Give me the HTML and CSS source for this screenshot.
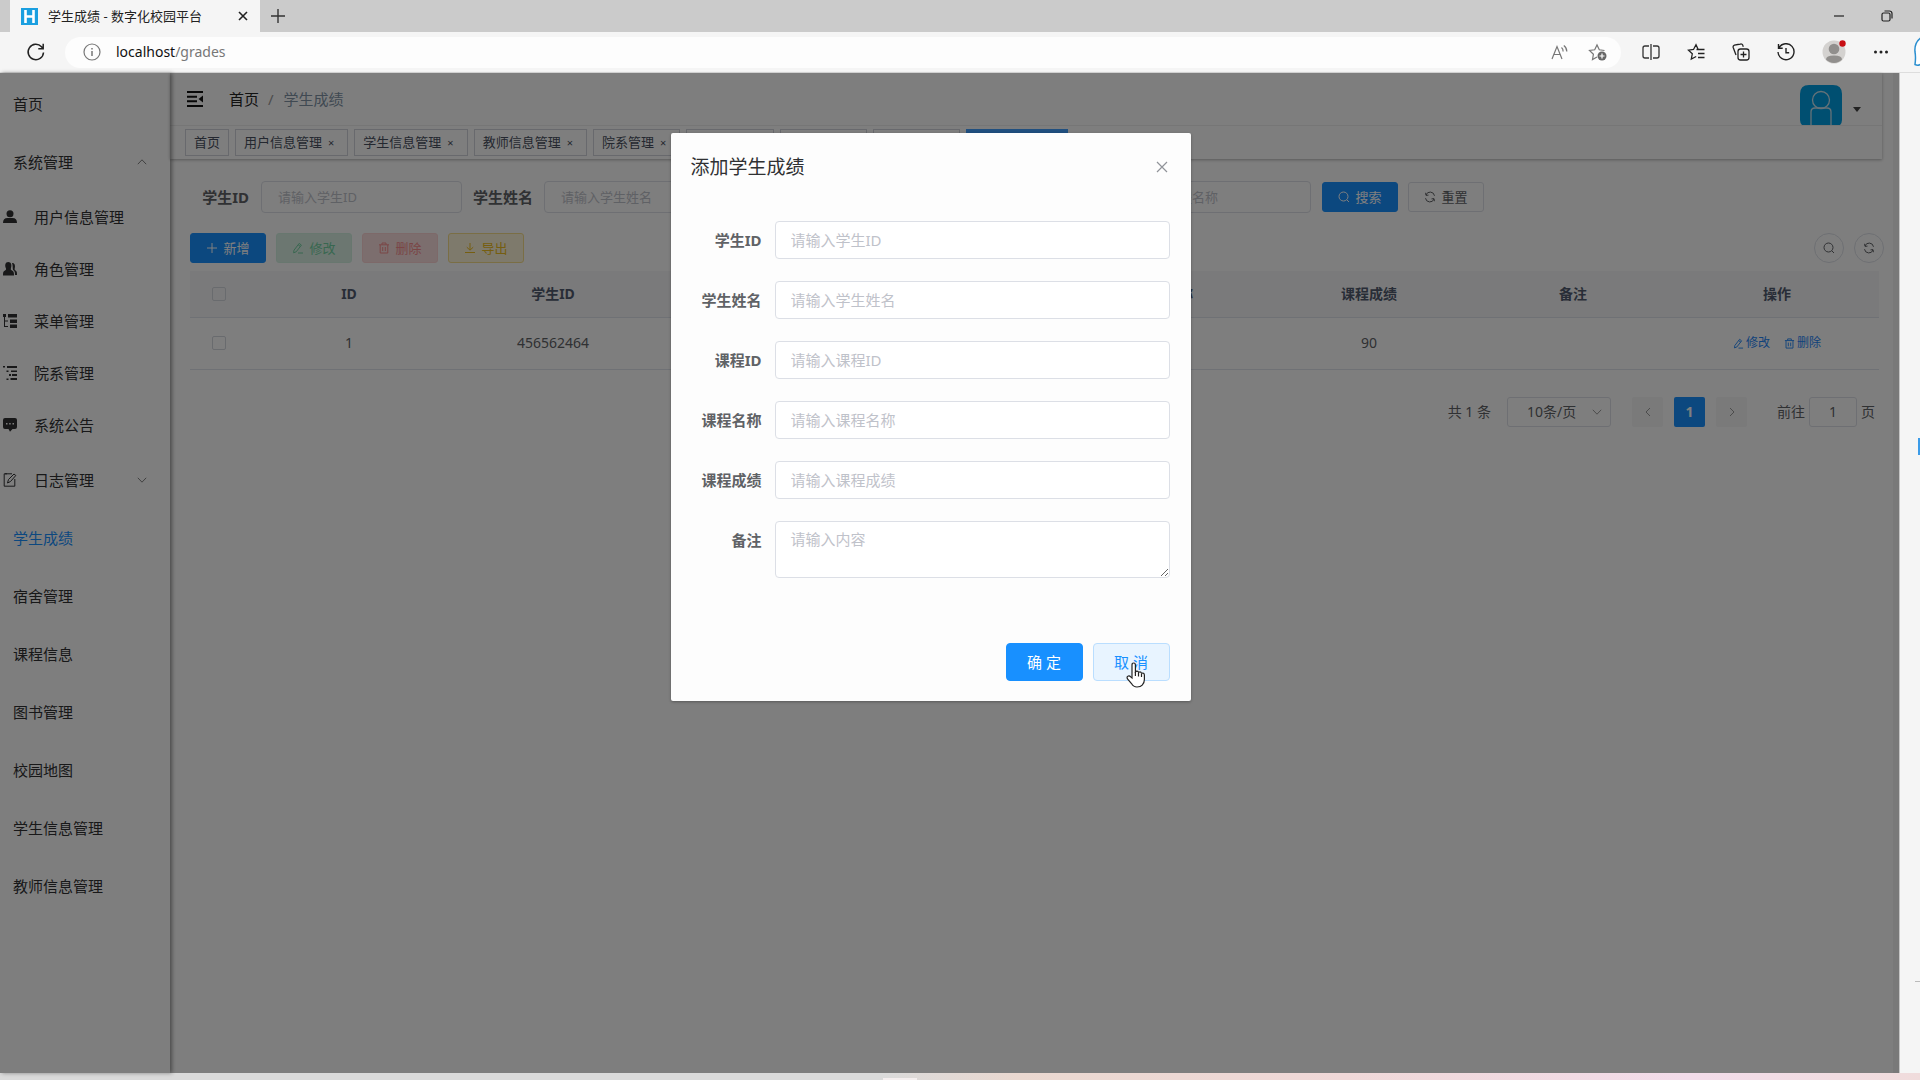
FILE: index.html
```html
<!DOCTYPE html>
<html lang="zh-CN">
<head>
<meta charset="utf-8">
<meta name="viewport" content="width=device-width, initial-scale=1">
<title>学生成绩 - 数字化校园平台</title>
<link rel="stylesheet" href="styles.css">
</head>
<body>
<svg class="sprite" aria-hidden="true">
  <symbol id="i-search" viewBox="0 0 12 12"><circle cx="5.5" cy="5.5" r="4.5"/><path d="M8.8 8.8 11 11"/></symbol>
  <symbol id="i-refresh" viewBox="0 0 12 12"><path d="M1.5 7.2A4.4 4.4 0 0 0 10 8M10.5 4.8A4.4 4.4 0 0 0 2 4M1.6 1.8 2 4.4l2.5-.3M10.4 10.2 10 7.6l-2.5.3"/></symbol>
  <symbol id="i-edit" viewBox="0 0 12 12"><path d="M2 8.2 7.2 1.4l2.2 1.7L4.2 9.8 1.6 10.8zM6 11h5M6.2 2.8l2.2 1.7"/></symbol>
  <symbol id="i-trash" viewBox="0 0 12 12"><path d="M1 2.8h10M4 2.6V1h4v1.6M2.2 3v8h7.6V3M4.7 5v4M7.3 5v4"/></symbol>
  <symbol id="i-plus" viewBox="0 0 12 12"><path d="M6 1v10M1 6h10"/></symbol>
  <symbol id="i-download" viewBox="0 0 12 12"><path d="M6 1v7M2.8 5.2 6 8.2l3.2-3M1 10.5h10"/></symbol>
  <symbol id="i-up" viewBox="0 0 10 10"><path d="M.8 7.2 5 2.8l4.2 4.4"/></symbol>
  <symbol id="i-down" viewBox="0 0 10 10"><path d="M.8 2.8 5 7.2l4.2-4.4"/></symbol>
  <symbol id="i-left" viewBox="0 0 10 10"><path d="M7 1 3 5l4 4"/></symbol>
  <symbol id="i-right" viewBox="0 0 10 10"><path d="M3 1l4 4-4 4"/></symbol>
</svg>

<header class="browser">
  <div class="tabstrip">
    <div class="tab">
      <svg class="favicon" viewBox="0 0 17 17"><rect width="17" height="17" fill="#1a9fe0"/><path d="M4.5 2v13M12.5 2v13M4.5 8.5h8" stroke="#fff" stroke-width="2.6" fill="none"/></svg>
      <span class="tab-title">学生成绩 - 数字化校园平台</span>
      <button class="bare" aria-label="关闭标签页"><svg width="10" height="10" viewBox="0 0 10 10"><path d="M1 1l8 8M9 1 1 9" stroke="#222" stroke-width="1.6"/></svg></button>
    </div>
    <button class="bare newtab" aria-label="新建标签页"><svg width="16" height="16" viewBox="0 0 16 16"><path d="M8 1v14M1 8h14" stroke="#333" stroke-width="1.4"/></svg></button>
    <div class="window-buttons">
      <button class="bare" aria-label="最小化"><svg width="12" height="12" viewBox="0 0 12 12"><path d="M1 6h10" stroke="#222" stroke-width="1.2"/></svg></button>
      <button class="bare" aria-label="还原"><svg width="12" height="12" viewBox="0 0 12 12" fill="none" stroke="#222" stroke-width="1.2"><rect x="1" y="3" width="8" height="8" rx="1.5"/><path d="M3.5 1h5A2.5 2.5 0 0 1 11 3.500v5"/></svg></button>
    </div>
  </div>
  <div class="toolbar">
    <button class="bare reload" aria-label="刷新"><svg width="20" height="20" viewBox="0 0 20 20" fill="none" stroke="#222" stroke-width="1.500"><path d="M17.500 10.500A7.700 7.700 0 1 1 15.500 4.800L17 6.500M17.200 1.800v4.900h-4.900"/></svg></button>
    <div class="address">
      <svg width="18" height="18" viewBox="0 0 18 18" fill="none" stroke="#777" stroke-width="1.2"><circle cx="9" cy="9" r="8"/><path d="M9 8v5M9 5v1.4" stroke-width="1.500"/></svg>
      <span class="url">localhost<span class="url-path">/grades</span></span>
      <button class="bare" aria-label="大声朗读"><svg width="18" height="16" viewBox="0 0 18 16" fill="none" stroke="#777" stroke-width="1.2"><path d="M1 15 6 2.500 11 15M2.800 10.500h6.400M10.500 3.500q1.800 1.500 1.600 4M12.800 1.500q3 2.200 3 6"/></svg></button>
      <button class="bare star" aria-label="收藏"><svg width="19" height="18" viewBox="0 0 19 18" fill="none" stroke="#777" stroke-width="1.2"><path d="M9 14 4.500 16.500l.9-5.200L1.500 7.500l5.200-.7L9 2l2.300 4.800 5.200.7"/><circle cx="14" cy="13" r="4.500" fill="#666" stroke="none"/><path d="M14 10.500v5M11.500 13h5" stroke="#fff"/></svg></button>
    </div>
    <div class="tools">
      <button class="bare" aria-label="分屏"><svg width="18" height="18" viewBox="0 0 18 18" fill="none" stroke="#333" stroke-width="1.300"><path d="M7 3H3a2 2 0 0 0-2 2v8a2 2 0 0 0 2 2h4M11 3h4a2 2 0 0 1 2 2v8a2 2 0 0 1-2 2h-4M9 1v16"/></svg></button>
      <button class="bare" aria-label="收藏夹"><svg width="18" height="18" viewBox="0 0 18 18" fill="none" stroke="#222" stroke-width="1.300"><path d="M9.500 6.500h8M11 10.500h6.500M11 14.500h6.500M9.200 13.500 4.300 16l1-5.200L1.500 7.200l5-.7L9 1.800l2.200 4.700"/></svg></button>
      <button class="bare" aria-label="集锦"><svg width="18" height="18" viewBox="0 0 18 18" fill="none" stroke="#222" stroke-width="1.300"><rect x="6" y="6" width="11" height="11" rx="2.500"/><path d="M11.500 8.500v6M8.500 11.500h6M4 12 1.200 4.500a2 2 0 0 1 1.200-2.400L8.500 1a2 2 0 0 1 2.400 1.500l.4 1.200"/></svg></button>
      <button class="bare" aria-label="历史记录"><svg width="18" height="18" viewBox="0 0 18 18" fill="none" stroke="#222" stroke-width="1.400"><path d="M2 4.800A8 8 0 1 1 1 9M1.500 1v4.200h4.200M9 5v4.800h3.200"/></svg></button>
      <button class="bare" aria-label="个人资料"><svg width="24" height="24" viewBox="0 0 24 24"><circle cx="12" cy="12" r="11.500" fill="#d4d2d0"/><circle cx="12" cy="9" r="5.300" fill="#918f8d"/><path d="M4 19.500q0-4 8-4t8 4a11 11 0 0 1-16 0z" fill="#918f8d"/><circle cx="20.500" cy="3.500" r="3.200" fill="#c80f14"/></svg></button>
      <button class="bare" aria-label="更多"><svg width="16" height="6" viewBox="0 0 16 6" fill="#222"><circle cx="2.500" cy="3" r="1.500"/><circle cx="8" cy="3" r="1.500"/><circle cx="13.500" cy="3" r="1.500"/></svg></button>
    </div>
    <svg class="bing" width="6" height="30" viewBox="0 0 6 30"><path d="M8 0Q0 5 1 15q1 5 0 12.500 3 1.500 6-.5" fill="#fff" stroke="#2b8fd0" stroke-width="1.500"/></svg>
  </div>
</header>

<div class="middle">
  <div class="viewport">
    <nav class="sidebar">
      <a href="#">首页</a>
      <a href="#">系统管理<svg class="line chevron"><use href="#i-up"/></svg></a>
      <div class="submenu">
        <a href="#"><svg viewBox="0 0 14 14"><circle cx="7" cy="3.800" r="3.500"/><path d="M0 13q0-5 4.500-5h5Q14 8 14 13z"/></svg>用户信息管理</a>
        <a href="#"><svg viewBox="0 0 14 14"><path d="M5.200 0c3 0 3.800 3 2.800 6-.5 1.500 0 2 1 2.500 2 .8 2 3 2 5H0c0-2.500 0-4.200 2-5 1.200-.5 1.200-1.500.8-2.500C1.500 3 2.500 0 5.200 0zM9 1c2.500-.3 3.500 2.500 2.800 5-.4 1.500 0 2 .7 2.500 1.500.8 1.500 2 1.500 4.500h-2c0-3-.3-4-2-5C9.500 6 10 3.500 9 1z"/></svg>角色管理</a>
        <a href="#"><svg viewBox="0 0 14 14"><path d="M0 0h3v3H2v3.500h3v1H2V12h3v1H1V3H0zM5 0h9v3.500H5zM7 5.500h7V9H7zM7 10.500h7V14H7z"/></svg>菜单管理</a>
        <a href="#"><svg viewBox="0 0 14 14"><path d="M0 0h2v1.500H0zM4 0h10v2H4zM3.500 4.500h2V6h-2zM8 4.500h6V6H8zM6 8h2v2H6zM9 8h5v2H9zM3.500 12.500h2V14h-2zM7.500 12h6.500v2H7.500z"/></svg>院系管理</a>
        <a href="#"><svg viewBox="0 0 14 14"><path fill-rule="evenodd" d="M2 0h10q2 0 2 2v7q0 2-2 2H9.500L7 13.800 5.500 11H2q-2 0-2-2V2q0-2 2-2zM3 5v1.500h1.500V5zm3.200 0v1.500h1.500V5zm3.300 0v1.500H11V5z"/></svg>系统公告</a>
      </div>
      <a class="with-icon" href="#"><svg class="line" viewBox="0 0 14 14"><path d="M9 .8H1.200v12.400h10.600V6M4.500 10l1-3.500L11 1l1.800 1.500L7.500 8.500zM2 .8h2"/></svg>日志管理<svg class="line chevron"><use href="#i-down"/></svg></a>
      <a class="active" href="#">学生成绩</a>
      <a href="#">宿舍管理</a>
      <a href="#">课程信息</a>
      <a href="#">图书管理</a>
      <a href="#">校园地图</a>
      <a href="#">学生信息管理</a>
      <a href="#">教师信息管理</a>
    </nav>

    <main class="main">
      <div class="topbar">
        <div class="navbar">
          <button class="bare" aria-label="折叠菜单"><svg width="18" height="16" viewBox="0 0 18 16"><path d="M1 1h16M1 5.700h10M1 10.300h10M1 15h16" stroke="#111" stroke-width="2"/><path d="M17 4.500v7L12.500 8z" fill="#111"/></svg></button>
          <div class="crumbs"><a href="#">首页</a><span class="slash">/</span><span class="current">学生成绩</span></div>
          <button class="bare user" aria-label="用户菜单">
            <svg width="42" height="40" viewBox="0 0 42 40"><path d="M9 0h24q9 0 9 9v26q0 3-2 5H2q-2-2-2-5V9q0-9 9-9z" fill="#009fe3"/><g fill="none" stroke="#cbe4f0" stroke-width="1.300"><circle cx="21" cy="15" r="8.500"/><path d="M11 40V27q0-4 4-4h12q4 0 4 4v13"/></g></svg>
            <svg class="caret" width="8" height="5" viewBox="0 0 8 5"><path d="M0 0h8L4 5z" fill="#444"/></svg>
          </button>
        </div>
        <div class="tags">
          <a href="#">首页</a>
          <a href="#">用户信息管理<i>×</i></a>
          <a href="#">学生信息管理<i>×</i></a>
          <a href="#">教师信息管理<i>×</i></a>
          <a href="#">院系管理<i>×</i></a>
          <a href="#">菜单管理<i>×</i></a>
          <a href="#">角色管理<i>×</i></a>
          <a href="#">系统公告<i>×</i></a>
          <a class="active" href="#">学生成绩<i>×</i></a>
        </div>
      </div>

      <div class="content">
        <form class="filters">
          <label for="q-sid">学生ID</label><input id="q-sid" placeholder="请输入学生ID">
          <label for="q-name">学生姓名</label><input id="q-name" placeholder="请输入学生姓名">
          <label for="q-cid">课程ID</label><input id="q-cid" placeholder="请输入课程ID">
          <label for="q-cname">课程名称</label><input id="q-cname" placeholder="请输入课程名称">
          <div class="buttons">
            <button type="button" class="btn primary"><svg class="line"><use href="#i-search"/></svg>搜索</button>
            <button type="button" class="btn"><svg class="line"><use href="#i-refresh"/></svg>重置</button>
          </div>
        </form>
        <div class="actions">
          <button class="btn primary"><svg class="line"><use href="#i-plus"/></svg>新增</button>
          <button class="btn success"><svg class="line"><use href="#i-edit"/></svg>修改</button>
          <button class="btn danger"><svg class="line"><use href="#i-trash"/></svg>删除</button>
          <button class="btn warning"><svg class="line"><use href="#i-download"/></svg>导出</button>
          <div class="rounds">
            <button class="round" aria-label="显示搜索"><svg class="line"><use href="#i-search"/></svg></button>
            <button class="round" aria-label="刷新列表"><svg class="line"><use href="#i-refresh"/></svg></button>
          </div>
        </div>
        <table>
          <thead>
            <tr><th class="check"><input type="checkbox" aria-label="全选"></th><th>ID</th><th>学生ID</th><th>学生姓名</th><th>课程ID</th><th>课程名称</th><th>课程成绩</th><th>备注</th><th>操作</th></tr>
          </thead>
          <tbody>
            <tr><td class="check"><input type="checkbox" aria-label="选择"></td><td>1</td><td>456562464</td><td></td><td></td><td></td><td>90</td><td></td>
              <td><div class="ops"><a href="#"><svg class="line"><use href="#i-edit"/></svg>修改</a><a href="#"><svg class="line"><use href="#i-trash"/></svg>删除</a></div></td></tr>
          </tbody>
        </table>
        <div class="pager">
          <span>共 1 条</span>
          <div class="size"><select aria-label="每页条数"><option>10条/页</option></select><svg class="line"><use href="#i-down"/></svg></div>
          <div class="pages">
            <button aria-label="上一页"><svg class="line"><use href="#i-left"/></svg></button>
            <button class="current">1</button>
            <button aria-label="下一页"><svg class="line"><use href="#i-right"/></svg></button>
          </div>
          <label>前往<input value="1">页</label>
        </div>
      </div>
    </main>
    <div class="scrollbar"></div>

    <div class="overlay">
      <section class="dialog" role="dialog" aria-labelledby="dialog-title">
        <div class="dialog-head">
          <h1 id="dialog-title">添加学生成绩</h1>
          <button class="bare" aria-label="关闭"><svg width="12" height="12" viewBox="0 0 12 12"><path d="M1 1l10 10M11 1 1 11" stroke="#909399" stroke-width="1.200"/></svg></button>
        </div>
        <form class="fields">
          <label for="f-sid">学生ID</label><input id="f-sid" placeholder="请输入学生ID">
          <label for="f-name">学生姓名</label><input id="f-name" placeholder="请输入学生姓名">
          <label for="f-cid">课程ID</label><input id="f-cid" placeholder="请输入课程ID">
          <label for="f-cname">课程名称</label><input id="f-cname" placeholder="请输入课程名称">
          <label for="f-score">课程成绩</label><input id="f-score" placeholder="请输入课程成绩">
          <label for="f-note">备注</label><textarea id="f-note" placeholder="请输入内容"></textarea>
        </form>
        <div class="dialog-foot">
          <button class="ok">确 定</button>
          <button class="cancel">取 消<svg class="pointer" width="20" height="26" viewBox="0 0 20 26"><path d="M6 14V3q0-2 1.700-2T9.400 3v7l1.200-.8q1.600-.2 2 1.200l1-.4q1.500-.2 1.900 1.300 2.600-.8 2.900 1.800v4.500q0 3.500-2.200 5.500-1.500 1.900-5.200 1.900-3.500 0-5.500-3.500L1.500 17q-1-2 .3-2.800 1.500-1 2.900.7L6 16z" fill="#fff" stroke="#222" stroke-width="1.200"/><path d="M9.400 10v4M12.500 11v3.500M15.500 12v3" stroke="#222" stroke-width="1.200"/></svg></button>
        </div>
      </section>
    </div>
  </div>
  <aside class="edge"><span class="app"></span><span class="rule"></span></aside>
</div>
<footer class="taskbar"><span></span></footer>
</body>
</html>
```
FILE: styles.css
```css
* { box-sizing: border-box; }

body {
  margin: 0;
  min-height: 100vh;
  display: flex;
  flex-direction: column;
  background: #f5f5f5;
  color: #606266;
  font: 14px/20px "Noto Sans", "Noto Sans CJK SC", sans-serif;
}

a { color: inherit; text-decoration: none; }
button, input, select, textarea { font: inherit; color: inherit; margin: 0; }
.sprite { position: absolute; width: 0; height: 0; }
.line, .sprite symbol { fill: none; stroke: currentColor; stroke-width: 1px; }
.bare { display: flex; align-items: center; justify-content: center; padding: 0; border: 0; background: none; }

/* Browser frame */
.tabstrip { display: flex; height: 32px; background: #cbcbcb; }
.tab {
  display: flex;
  align-items: center;
  width: 250px;
  margin-left: 10px;
  padding: 0 12px 0 11px;
  background: #f5f5f5;
  color: #222;
  font-size: 13px;
}
.favicon { width: 17px; height: 17px; margin-right: 10px; }
.tab-title { flex: 1; white-space: nowrap; }
.newtab { margin-left: 10px; }
.window-buttons { display: flex; gap: 36px; margin-left: auto; padding-right: 27px; }
.toolbar { display: flex; align-items: center; height: 41px; border-bottom: 1px solid #ddd; }
.reload { margin: 0 19px 0 26px; }
.address {
  flex: 1;
  display: flex;
  align-items: center;
  height: 31px;
  padding: 0 14px 0 18px;
  border-radius: 16px;
  background: #fdfdfd;
}
.url { flex: 1; margin-left: 15px; font-size: 14px; color: #111; }
.url-path { color: #777; }
.star { margin-left: 19px; }
.tools { display: flex; align-items: center; gap: 27px; margin: 0 25px 0 21px; }
.bing { flex: none; }

/* Page area */
.middle { flex: 1; display: flex; }
.viewport { position: relative; flex: 1; display: flex; background: #fdfdfd; }
.sidebar {
  width: 170px;
  padding-top: 2px;
  color: #303133;
  font-size: 15px;
  box-shadow: 2px 0 4px rgba(0, 0, 0, .4);
  z-index: 1;
}
.sidebar a { display: flex; align-items: center; height: 58px; padding: 0 23px 0 13px; }
.sidebar .submenu a { height: 52px; padding-left: 3px; }
.sidebar .with-icon { padding-left: 3px; }
.sidebar svg { width: 14px; height: 14px; margin-right: 17px; fill: #303133; }
.sidebar svg.line { fill: none; }
.sidebar svg.chevron { width: 10px; height: 10px; margin: 0 0 0 auto; color: #808080; }
.sidebar .active { color: #1890ff; }

.main { flex: 1; }
.topbar { margin-right: 11px; box-shadow: 0 1px 3px rgba(0, 0, 0, .3); }
.navbar { display: flex; align-items: center; height: 53px; padding: 0 21px 0 16px; border-bottom: 1px solid #ececec; }
.crumbs { display: flex; margin-left: 25px; font-size: 15px; color: #222; }
.slash { margin: 0 10px 0 9px; color: #999; }
.crumbs .current { color: #8092a5; }
.user { align-self: flex-end; margin-left: auto; }
.caret { margin: 8px 0 0 11px; }
.tags { display: flex; gap: 6px; height: 33px; padding: 3px 15px; }
.tags a {
  height: 27px;
  padding: 0 8px;
  border: 1px solid #d0d3da;
  color: #495060;
  font-size: 13px;
  line-height: 25px;
}
.tags i { margin: 0 5px 0 6px; font-style: normal; font-size: 11px; }
.tags .active { padding: 0 15px; border-color: #409eff; background: #409eff; color: #fff; }

.content { padding: 22px 9px 0 20px; }
.filters { display: flex; align-items: center; font-size: 13px; }
.filters label { width: 71px; padding-right: 12px; text-align: right; font-size: 15px; font-weight: 700; white-space: nowrap; }
.filters input { width: 201px; height: 32px; margin-right: 11px; padding: 0 16px; border: 1px solid #dcdfe6; border-radius: 4px; background: none; }
::placeholder { color: #bfc2ca; opacity: 1; }
.buttons { display: flex; gap: 10px; }
.btn {
  display: flex;
  align-items: center;
  justify-content: center;
  gap: 5px;
  width: 76px;
  height: 30px;
  padding: 0;
  border: 1px solid #dcdfe6;
  border-radius: 3px;
  background: none;
  font-size: 13px;
}
.btn svg, .round svg { width: 12px; height: 12px; }
.primary { border-color: #1890ff; background: #1890ff; color: #fff; }
.success { border-color: #d0efdf; background: #d8efe3; color: #71cfa0; }
.danger { border-color: #fbd3d3; background: #f8dddd; color: #f58b8b; }
.warning { border-color: #f5dc8a; background: #fcf4d8; color: #edbc20; }
.actions { display: flex; gap: 10px; margin-top: 20px; }
.rounds { display: flex; gap: 10px; margin-left: auto; }
.round { display: flex; align-items: center; justify-content: center; width: 30px; height: 30px; padding: 0; border: 1px solid #dcdfe6; border-radius: 50%; background: none; }

table { width: calc(100% - 5px); margin-top: 8px; border-collapse: collapse; table-layout: fixed; text-align: center; }
th { height: 46px; padding: 0; background: #f5f5f6; color: #515a6e; border-bottom: 1px solid #dfe3ea; }
td { height: 52px; padding: 0; border-bottom: 1px solid #dfe3ea; }
.check { width: 57px; }
.check input { appearance: none; display: block; width: 14px; height: 14px; margin: 0 auto; border: 1px solid #d3d6dd; border-radius: 2px; }
.ops { display: flex; justify-content: center; gap: 14px; color: #1f84f5; font-size: 12px; }
.ops a { display: flex; align-items: center; gap: 2px; }
.ops svg { width: 11px; height: 11px; }

.pager { display: flex; align-items: center; justify-content: flex-end; margin: 27px 9px 0 0; }
.size { display: flex; align-items: center; width: 104px; height: 30px; margin: 0 21px 0 16px; padding-right: 8px; border: 1px solid #dcdfe6; border-radius: 3px; }
.size select { flex: 1; padding: 0 0 0 19px; border: 0; background: none; appearance: none; }
.pager svg { width: 10px; height: 10px; color: #999; }
.pages { display: flex; gap: 11px; margin-right: 30px; }
.pages button { width: 31px; height: 30px; padding: 0; border: 0; border-radius: 2px; background: #f4f4f5; }
.pages .current { background: #1890ff; color: #fff; font-weight: 700; }
.pager label { display: flex; align-items: center; }
.pager label input { width: 48px; height: 30px; margin: 0 4px; padding: 0; border: 1px solid #dcdfe6; border-radius: 3px; background: none; text-align: center; }
.scrollbar { width: 6px; background: #f2f2f2; }

/* Modal */
.overlay { position: absolute; inset: 0; z-index: 2; padding: 60px 38px 0 0; background: rgba(0, 0, 0, .5); }
.dialog { width: 520px; margin: 0 auto; padding: 20px 21px 20px 20px; border-radius: 2px; background: #fdfdfd; box-shadow: 0 1px 3px rgba(0, 0, 0, .3); }
.dialog-head { display: flex; align-items: center; justify-content: space-between; height: 28px; padding-right: 2px; }
h1 { margin: 0; color: #303133; font-size: 19px; font-weight: 400; line-height: 28px; }
.fields { display: grid; grid-template-columns: 84px 1fr; row-gap: 22px; margin-top: 40px; font-size: 15px; }
.fields label { padding-right: 13px; text-align: right; font-weight: 700; line-height: 38px; }
.fields input, .fields textarea { width: 100%; height: 38px; padding: 0 15px; border: 1px solid #dcdfe6; border-radius: 4px; background: #fff; }
.fields textarea { display: block; height: 57px; padding-top: 7px; resize: vertical; }
.dialog-foot { display: flex; justify-content: flex-end; gap: 10px; margin-top: 65px; }
.dialog-foot button { position: relative; width: 77px; height: 38px; padding: 0; border: 1px solid #1890ff; border-radius: 4px; background: #1890ff; color: #fff; font-size: 15px; }
.dialog-foot .cancel { border-color: #badeff; background: #e8f4ff; color: #1890ff; }
.pointer { position: absolute; left: 32px; top: 18px; }

/* Browser side panel and taskbar */
.edge { display: flex; flex-direction: column; align-items: flex-end; width: 21px; border-left: 1px solid #c4c4c4; }
.app { width: 2px; height: 17px; margin-top: 365px; background: #3b9be8; }
.rule { width: 5px; height: 1px; margin-top: 526px; background: #bbb; }
.taskbar { display: flex; align-items: flex-end; height: 7px; background: linear-gradient(90deg, #dadada 0 46%, #ead8d0 53%, #f0d8d8 70%, #f3dcea 88%, #f0dcdc); }
.taskbar span { width: 34px; height: 2px; margin-left: 46%; background: #f5efef; }
```
